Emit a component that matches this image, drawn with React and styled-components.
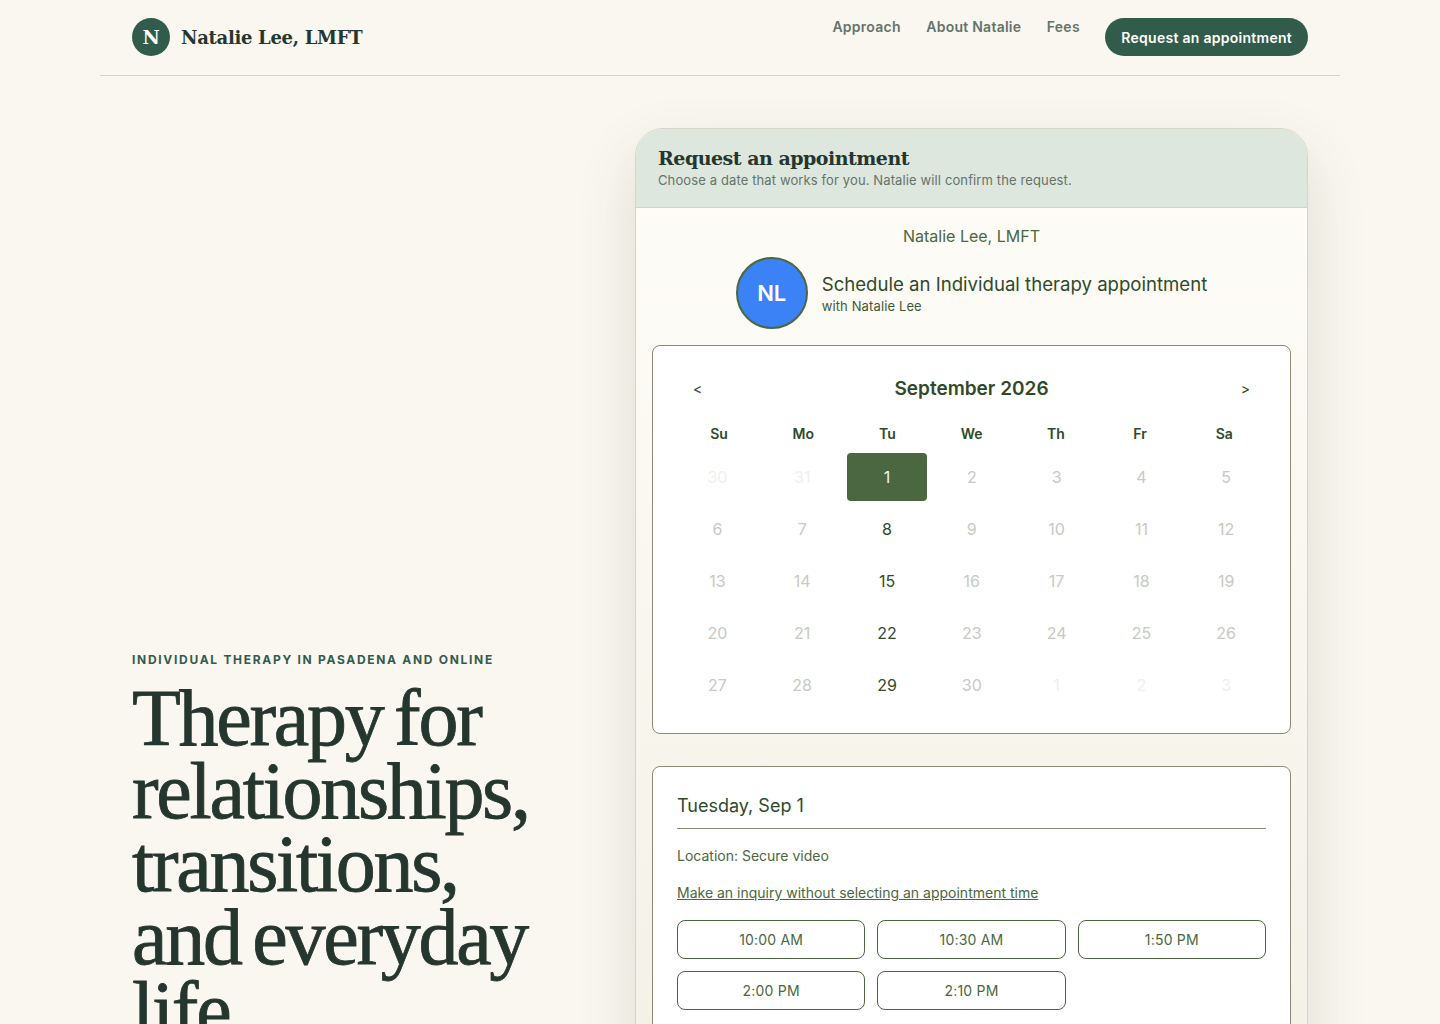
import React from "react";
import styled, { createGlobalStyle } from "styled-components";

const sans = `Inter, "Liberation Sans", sans-serif`;
const serif = `"DejaVu Serif", "Liberation Serif", serif`;

const GlobalStyle = createGlobalStyle`
  * {
    box-sizing: border-box;
  }
  html, body {
    margin: 0;
    padding: 0;
    height: 1024px;
    overflow: hidden;
    background: #faf7f0;
    font-family: ${sans};
  }
`;

const Header = styled.header`
  width: 1240px;
  height: 76px;
  margin: 0 auto;
  padding: 18px 32px 0;
  display: flex;
  justify-content: space-between;
  align-items: flex-start;
  border-bottom: 1px solid #d2d5c8;
`;

const Brand = styled.a`
  display: flex;
  align-items: center;
  gap: 11px;
  font-family: ${serif};
  font-weight: 700;
  font-size: 18px;
  letter-spacing: -0.3px;
  color: #25362e;
`;

const BrandMark = styled.span`
  width: 38px;
  height: 38px;
  border-radius: 50%;
  background: #315c4b;
  color: #fff;
  display: flex;
  align-items: center;
  justify-content: center;
  font-size: 19px;
`;

const Nav = styled.nav`
  display: flex;
  align-items: flex-start;
  gap: 25.5px;
`;

const NavLink = styled.a`
  font-size: 14px;
  font-weight: 600;
  line-height: 18px;
  letter-spacing: 0.25px;
  color: #65736b;
`;

const NavButton = styled.a`
  height: 38px;
  padding: 0 16px;
  border-radius: 19px;
  background: #315c4b;
  color: #fff;
  font-size: 14px;
  font-weight: 600;
  letter-spacing: 0.27px;
  display: flex;
  align-items: center;
`;

const Hero = styled.main`
  width: 1240px;
  margin: 0 auto;
  padding: 52px 32px 0;
  display: grid;
  grid-template-columns: 1fr 673px;
  gap: 32px;
`;

const Intro = styled.section`
  padding-top: 524px;
`;

const Eyebrow = styled.p`
  margin: 0 0 14px;
  font-size: 12px;
  font-weight: 700;
  line-height: 16px;
  letter-spacing: 1.7px;
  text-transform: uppercase;
  color: #315c4b;
`;

const Title = styled.h1`
  margin: 0;
  max-width: 415px;
  font-family: "Liberation Serif", serif;
  font-weight: 400;
  font-size: 80px;
  line-height: 73px;
  letter-spacing: -2.3px;
  word-spacing: -6px;
  color: #25362e;
  -webkit-text-stroke: 0.8px #25362e;
`;

const Card = styled.section`
  border: 1px solid #d2d5c8;
  border-radius: 28px 28px 0 0;
  background: linear-gradient(#fffdf8, #f4f1e7 900px);
  box-shadow: 0 24px 60px rgba(60, 55, 35, 0.14);
  overflow: hidden;
`;

const CardHead = styled.div`
  height: 79px;
  padding: 17px 22px 0;
  background: #dde7de;
  border-bottom: 1px solid #cbd6cc;
`;

const CardTitle = styled.h2`
  margin: 0;
  font-family: ${serif};
  font-size: 19px;
  font-weight: 700;
  line-height: 24px;
  letter-spacing: -0.5px;
  color: #25362e;
`;

const CardSub = styled.p`
  margin: 0;
  font-size: 13px;
  line-height: 20px;
  letter-spacing: 0.12px;
  color: #65736b;
`;

const CardBody = styled.div`
  padding: 18px 16px 32px;
`;

const Provider = styled.p`
  margin: 0 0 11px;
  font-size: 16px;
  line-height: 20px;
  text-align: center;
  color: #4a6741;
`;

const Summary = styled.div`
  display: flex;
  justify-content: center;
  align-items: center;
  gap: 14px;
  margin-bottom: 16px;
`;

const Avatar = styled.div`
  width: 72px;
  height: 72px;
  border-radius: 50%;
  border: 2px solid #4a6741;
  background: #3b82f6;
  color: #fff;
  font-size: 22px;
  font-weight: 600;
  display: flex;
  align-items: center;
  justify-content: center;
`;

const SummaryTitle = styled.div`
  font-size: 18.6px;
  line-height: 26px;
  color: #2f4a2b;
`;

const SummarySub = styled.div`
  font-size: 13px;
  line-height: 18px;
  letter-spacing: 0.12px;
  color: #3f5a39;
`;

const Panel = styled.div`
  border: 1px solid #8a8a76;
  border-radius: 8px;
  background: #fff;
`;

const CalendarPanel = styled(Panel)`
  height: 389px;
  padding: 29px 22px 0;
  margin-bottom: 32px;
`;

const MonthRow = styled.div`
  display: flex;
  justify-content: space-between;
  align-items: center;
  height: 26px;
  padding: 0 18px;
  color: #2f4a2b;
  margin-bottom: 24px;
`;

const MonthArrow = styled.span`
  font-size: 14px;
`;

const MonthName = styled.div`
  font-size: 19px;
  font-weight: 600;
`;

const Week = styled.div`
  display: grid;
  grid-template-columns: repeat(7, 84.2px);
  padding-left: 2px;
  margin-bottom: 10px;
`;

const WeekDay = styled.div`
  font-size: 14px;
  font-weight: 600;
  line-height: 18px;
  text-align: center;
  color: #2f4a2b;
`;

const Days = styled.div`
  display: grid;
  grid-template-columns: repeat(7, 84.8px);
  grid-auto-rows: 48px;
  row-gap: 4px;
`;

const dayColors = {
  faint: "#f0f0ec",
  muted: "#c8c9c2",
  open: "#2f4a2b",
  selected: "#f4f5ef",
};

const Day = styled.div`
  display: flex;
  align-items: center;
  justify-content: center;
  margin: 0 ${(p) => (p.$kind === "selected" ? "2px" : "0")};
  border-radius: 4px;
  font-size: 16px;
  background: ${(p) => (p.$kind === "selected" ? "#4a6741" : "transparent")};
  color: ${(p) => dayColors[p.$kind]};
`;

const TimesPanel = styled(Panel)`
  padding: 24px;
`;

const DateHead = styled.div`
  padding-bottom: 7px;
  font-size: 18px;
  line-height: 30px;
  color: #2f4a2b;
  border-bottom: 1px solid #8a8a76;
  margin-bottom: 17px;
`;

const Location = styled.p`
  margin: 0 0 17px;
  font-size: 14px;
  line-height: 20px;
  color: #4a6741;
`;

const Inquiry = styled.a`
  display: block;
  margin-bottom: 17px;
  font-size: 14px;
  line-height: 20px;
  text-decoration: underline;
  color: #4a6741;
`;

const Slots = styled.div`
  display: grid;
  grid-template-columns: repeat(3, 1fr);
  gap: 12px;
`;

const Slot = styled.button`
  height: 39px;
  border: 1px solid #4a6741;
  border-radius: 8px;
  background: #fff;
  font-family: ${sans};
  font-size: 14px;
  letter-spacing: 0.2px;
  color: #4a6741;
`;

const weeks = [
  [["30", "faint"], ["31", "faint"], ["1", "selected"], ["2", "muted"], ["3", "muted"], ["4", "muted"], ["5", "muted"]],
  [["6", "muted"], ["7", "muted"], ["8", "open"], ["9", "muted"], ["10", "muted"], ["11", "muted"], ["12", "muted"]],
  [["13", "muted"], ["14", "muted"], ["15", "open"], ["16", "muted"], ["17", "muted"], ["18", "muted"], ["19", "muted"]],
  [["20", "muted"], ["21", "muted"], ["22", "open"], ["23", "muted"], ["24", "muted"], ["25", "muted"], ["26", "muted"]],
  [["27", "muted"], ["28", "muted"], ["29", "open"], ["30", "muted"], ["1", "faint"], ["2", "faint"], ["3", "faint"]],
];

const slots = ["10:00 AM", "10:30 AM", "1:50 PM", "2:00 PM", "2:10 PM"];

export default function App() {
  return (
    <>
      <GlobalStyle />
      <Header>
        <Brand>
          <BrandMark>N</BrandMark>
          Natalie Lee, LMFT
        </Brand>
        <Nav>
          <NavLink>Approach</NavLink>
          <NavLink>About Natalie</NavLink>
          <NavLink>Fees</NavLink>
          <NavButton>Request an appointment</NavButton>
        </Nav>
      </Header>
      <Hero>
        <Intro>
          <Eyebrow>Individual therapy in Pasadena and online</Eyebrow>
          <Title>Therapy for relationships, transitions, and everyday life</Title>
        </Intro>
        <Card>
          <CardHead>
            <CardTitle>Request an appointment</CardTitle>
            <CardSub>Choose a date that works for you. Natalie will confirm the request.</CardSub>
          </CardHead>
          <CardBody>
            <Provider>Natalie Lee, LMFT</Provider>
            <Summary>
              <Avatar>NL</Avatar>
              <div>
                <SummaryTitle>Schedule an Individual therapy appointment</SummaryTitle>
                <SummarySub>with Natalie Lee</SummarySub>
              </div>
            </Summary>
            <CalendarPanel>
              <MonthRow>
                <MonthArrow>&lt;</MonthArrow>
                <MonthName>September 2026</MonthName>
                <MonthArrow>&gt;</MonthArrow>
              </MonthRow>
              <Week>
                {["Su", "Mo", "Tu", "We", "Th", "Fr", "Sa"].map((d) => (
                  <WeekDay key={d}>{d}</WeekDay>
                ))}
              </Week>
              <Days>
                {weeks.flat().map(([label, kind], i) => (
                  <Day key={i} $kind={kind}>{label}</Day>
                ))}
              </Days>
            </CalendarPanel>
            <TimesPanel>
              <DateHead>Tuesday, Sep 1</DateHead>
              <Location>Location: Secure video</Location>
              <Inquiry>Make an inquiry without selecting an appointment time</Inquiry>
              <Slots>
                {slots.map((s) => (
                  <Slot key={s}>{s}</Slot>
                ))}
              </Slots>
            </TimesPanel>
          </CardBody>
        </Card>
      </Hero>
    </>
  );
}
